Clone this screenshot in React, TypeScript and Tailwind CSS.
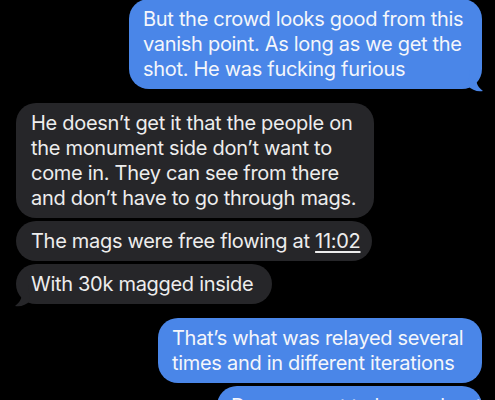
import React from 'react';

type Msg = {
  id: number;
  mine: boolean;
  lines: React.ReactNode[];
  width: string;
  tail?: boolean;
  gap: string;
};

const messages: Msg[] = [
  {
    id: 1,
    mine: true,
    width: 'w-[353px]',
    tail: true,
    gap: 'mt-[-1px]',
    lines: ['But the crowd looks good from this', 'vanish point. As long as we get the', 'shot. He was fucking furious'],
  },
  {
    id: 2,
    mine: false,
    width: 'w-[358px]',
    gap: 'mt-[14px]',
    lines: [
      'He doesn’t get it that the people on',
      'the monument side don’t want to',
      'come in. They can see from there',
      'and don’t have to go through mags.',
    ],
  },
  {
    id: 3,
    mine: false,
    width: 'w-[356px]',
    gap: 'mt-[3px]',
    lines: [
      <>
        The mags were free flowing at <span className="underline underline-offset-[3px]">11:02</span>
      </>,
    ],
  },
  {
    id: 4,
    mine: false,
    width: 'w-[256px]',
    tail: true,
    gap: 'mt-[3px]',
    lines: ['With 30k magged inside'],
  },
  {
    id: 5,
    mine: true,
    width: 'w-[324px]',
    gap: 'mt-[14px]',
    lines: ['That’s what was relayed several', 'times and in different iterations'],
  },
  {
    id: 6,
    mine: true,
    width: 'w-[265px]',
    gap: 'mt-[3px]',
    lines: ['Do you want to know about', 'that'],
  },
];

const Tail = ({ mine }: { mine: boolean }) =>
  mine ? (
    <svg className="absolute right-[-6px] bottom-[-3px]" width="22" height="22" viewBox="0 0 22 22">
      <path d="M4 0 L10 0 L10 8 C10 14 13 18 17 21 C11 22 6 20 2 16 Z" fill="#4a86e8" />
    </svg>
  ) : (
    <svg className="absolute left-[-6px] bottom-[-3px]" width="22" height="22" viewBox="0 0 22 22">
      <path d="M18 0 L12 0 L12 8 C12 14 9 18 5 21 C11 22 16 20 20 16 Z" fill="#262629" />
    </svg>
  );

export default function App() {
  return (
    <div className="w-[495px] h-[400px] overflow-hidden bg-black font-['Inter','Liberation_Sans',sans-serif] text-[20px] leading-[25px] tracking-[-0.3px]">
      <div className="flex flex-col pl-4 pr-[13px]">
        {messages.map((m) => (
          <div
            key={m.id}
            className={`${m.gap} ${m.width} relative rounded-[20px] px-[14px] py-[7.5px] whitespace-nowrap ${
              m.mine ? 'self-end bg-[#4a86e8] text-[#f4f6fb]' : 'self-start bg-[#262629] text-[#ededed] pl-[15px]'
            }`}
          >
            {m.tail && <Tail mine={m.mine} />}
            <div className="relative">
              {m.lines.map((l, i) => (
                <div key={i}>{l}</div>
              ))}
            </div>
          </div>
        ))}
      </div>
    </div>
  );
}
